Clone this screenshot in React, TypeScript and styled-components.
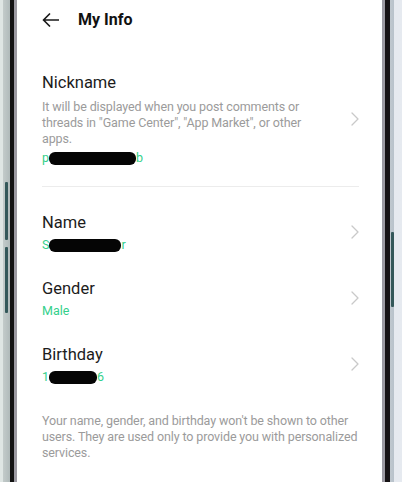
import React from 'react';
import styled, { createGlobalStyle } from 'styled-components';

const GlobalStyle = createGlobalStyle`
  html, body {
    margin: 0;
    padding: 0;
    background: #e6ecec;
  }
  body {
    font-family: Roboto, "Noto Sans", "Liberation Sans", sans-serif;
    -webkit-font-smoothing: antialiased;
  }
`;

interface Field {
  title: string;
  hint?: string;
  before: string;
  after?: string;
  masked?: number;
}

const profile: Field = {
  title: 'Nickname',
  hint: 'It will be displayed when you post comments or threads in "Game Center", "App Market", or other apps.',
  before: 'p',
  masked: 87,
  after: 'b',
};

const fields: Field[] = [
  { title: 'Name', before: 'S', masked: 72, after: 'r' },
  { title: 'Gender', before: 'Male' },
  { title: 'Birthday', before: '1', masked: 48, after: '6' },
];

const Chevron = () => (
  <svg width="8" height="14" viewBox="0 0 8 14" fill="none">
    <path d="M1 1l6 6-6 6" stroke="#c9c9c9" strokeWidth="1.3" strokeLinecap="round" strokeLinejoin="round" />
  </svg>
);

const BackArrow = () => (
  <svg width="17" height="14" viewBox="0 0 17 14" fill="none">
    <path d="M16.5 7H1.5M7.5 1L1.5 7l6 6" stroke="#1a1a1a" strokeWidth="1.7" strokeLinecap="round" strokeLinejoin="round" />
  </svg>
);

const FieldRow: React.FC<{ field: Field }> = ({ field }) => (
  <Row>
    <Info>
      <Title>{field.title}</Title>
      {field.hint && <Hint>{field.hint}</Hint>}
      <Value>
        {field.before}
        {field.masked && <Mask style={{ width: field.masked }} />}
        {field.after}
      </Value>
    </Info>
    <Chevron />
  </Row>
);

const App = () => {
  return (
    <>
      <GlobalStyle />
      <Page>
        <Bezel>
          <ButtonLeft top={182} h={58} />
          <ButtonLeft top={247} h={66} />
          <ButtonRight top={232} h={75} />
          <Rim>
            <Screen>
              <Header>
                <BackArrow />
                <HeaderTitle>My Info</HeaderTitle>
              </Header>
              <NickSection>
                <FieldRow field={profile} />
              </NickSection>
              <Divider />
              <List>
                {fields.map(f => (
                  <FieldRow key={f.title} field={f} />
                ))}
              </List>
              <Footer>
                Your name, gender, and birthday won't be shown to other users. They are used only to provide you with
                personalized services.
              </Footer>
            </Screen>
          </Rim>
        </Bezel>
      </Page>
    </>
  );
};

export default App;

const Page = styled.div`
  width: 402px;
  height: 482px;
  display: flex;
  overflow: hidden;
  background: linear-gradient(90deg, #dfe6e4 0%, #e6eaf0 100%);
`;

const Bezel = styled.div`
  position: relative;
  margin-left: 3px;
  width: 391px;
  padding: 0 4px 0 7px;
  box-sizing: border-box;
  display: flex;
  background: linear-gradient(90deg, #c3cbca 0%, #aeb8b8 2%, #c6cdd2 98%, #b8c2cb 100%);
`;

const ButtonLeft = styled.div<{ top: number; h: number }>`
  position: absolute;
  left: 2px;
  top: ${p => p.top}px;
  height: ${p => p.h}px;
  width: 3px;
  border-radius: 1px;
  background: #34585a;
`;

const ButtonRight = styled.div<{ top: number; h: number }>`
  position: absolute;
  right: 0;
  top: ${p => p.top}px;
  height: ${p => p.h}px;
  width: 3px;
  border-radius: 1px;
  background: #34585a;
`;

const Rim = styled.div`
  flex: 1;
  display: flex;
  border-left: 4px solid #121212;
  border-right: 5px solid #161214;
  padding: 0 3px;
  background: #9c9aa2;
`;

const Screen = styled.div`
  flex: 1;
  background: #ffffff;
  padding: 0 23px 0 25px;
  display: flex;
  flex-direction: column;
`;

const Header = styled.div`
  height: 40px;
  display: flex;
  align-items: center;
  gap: 19px;
`;

const HeaderTitle = styled.div`
  font-size: 16px;
  font-weight: 700;
  line-height: 24px;
  color: #111111;
`;

const NickSection = styled.div`
  padding: 19px 0 8px;
`;

const Row = styled.div`
  display: flex;
  align-items: center;
  justify-content: space-between;
  padding: 13px 0 12px;
`;

const Info = styled.div`
  flex: 1;
  max-width: 292px;
  display: flex;
  flex-direction: column;
`;

const Title = styled.div`
  font-size: 16.5px;
  line-height: 22px;
  color: #1c1c1c;
`;

const Hint = styled.div`
  margin-top: 4.5px;
  font-size: 12.5px;
  line-height: 16px;
  letter-spacing: -0.12px;
  color: #9b9b9b;
`;

const Value = styled.div`
  margin-top: 3px;
  height: 16px;
  display: flex;
  align-items: center;
  font-size: 12.5px;
  line-height: 16px;
  color: #34d08b;
`;

const Mask = styled.span`
  display: inline-block;
  height: 13px;
  margin-top: 2px;
  border-radius: 6px;
  background: #050505;
`;

const Divider = styled.div`
  height: 1px;
  background: #ececec;
`;

const List = styled.div`
  padding-top: 12px;
  display: flex;
  flex-direction: column;
`;

const Footer = styled.div`
  margin-top: 16px;
  font-size: 12.5px;
  line-height: 16px;
  letter-spacing: -0.12px;
  color: #9b9b9b;
`;
